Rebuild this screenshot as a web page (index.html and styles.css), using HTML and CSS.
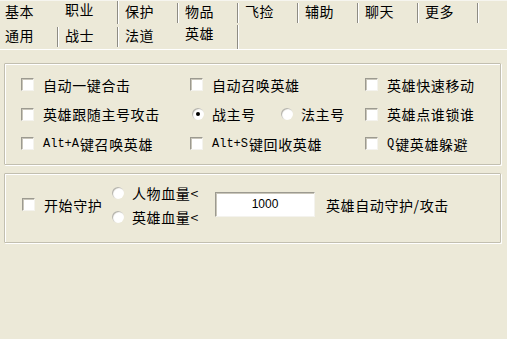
FILE: index.html
```html
<!DOCTYPE html>
<html>
<head>
<meta charset="utf-8">
<link rel="stylesheet" href="styles.css">
</head>
<body>
<div class="tabs">
  <div class="tabrow">
    <div class="tab">基本</div>
    <div class="tab sel sep">职业</div>
    <div class="tab sep">保护</div>
    <div class="tab sep">物品</div>
    <div class="tab sep">飞捡</div>
    <div class="tab sep">辅助</div>
    <div class="tab sep">聊天</div>
    <div class="tab sep">更多</div>
  </div>
  <div class="tabrow row2">
    <div class="tab sep">通用</div>
    <div class="tab sep">战士</div>
    <div class="tab">法道</div>
    <div class="tab sel sep">英雄</div>
  </div>
</div>
<div class="panel">
  <div class="group g1">
    <label class="item"><span class="cb"></span><span>自动一键合击</span></label>
    <label class="item"><span class="cb"></span><span>自动召唤英雄</span></label>
    <label class="item"><span class="cb"></span><span>英雄快速移动</span></label>
    <label class="item"><span class="cb"></span><span>英雄跟随主号攻击</span></label>
    <div class="item radios">
      <label class="ritem r-war"><span class="rb on"></span><span>战主号</span></label>
      <label class="ritem"><span class="rb"></span><span>法主号</span></label>
    </div>
    <label class="item"><span class="cb"></span><span>英雄点谁锁谁</span></label>
    <label class="item"><span class="cb"></span><span class="mono">Alt+A</span><span>键召唤英雄</span></label>
    <label class="item"><span class="cb"></span><span class="mono">Alt+S</span><span>键回收英雄</span></label>
    <label class="item"><span class="cb"></span><span class="mono">Q</span><span>键英雄躲避</span></label>
  </div>
  <div class="group g2">
    <label class="item guard"><span class="cb"></span><span>开始守护</span></label>
    <div class="rcol">
      <label class="ritem"><span class="rb"></span><span>人物血量&lt;</span></label>
      <label class="ritem"><span class="rb"></span><span>英雄血量&lt;</span></label>
    </div>
    <div class="edit">1000</div>
    <div class="note">英雄自动守护/攻击</div>
  </div>
</div>
</body>
</html>
```
FILE: styles.css
```css
* { box-sizing: border-box; }
html, body {
  margin: 0;
  padding: 0;
  background: #ECE9D8;
  width: 507px;
  height: 339px;
  overflow: hidden;
}
body {
  font-family: "Noto Sans CJK SC", "Liberation Sans", sans-serif;
  font-size: 14px;
  letter-spacing: 0.6px;
  color: #000;
  border-top: 1px solid #F6F5EF;
}
.tabs { display: flex; flex-direction: column; }
.tabrow {
  display: flex;
  height: 24px;
  align-items: center;
}
.tab {
  width: 58px;
  margin-right: 2px;
  height: 20px;
  line-height: 16px;
  padding-left: 5px;
  white-space: nowrap;
}
.tab.sep {
  border-right: 1px solid #8E8C84;
  box-shadow: 1px 0 0 #FFFFFF;
}
.tab.sel {
  align-self: flex-start;
  height: 23px;
}
.row2 .tab.sel { height: 24px; }
.panel {
  border-top: 1px solid #FFFFFF;
  padding: 13px 6px 0 4px;
}
.group {
  border: 1px solid #C2BFB0;
  box-shadow: inset 1px 1px 0 #FFFFFF, 1px 1px 0 #FFFFFF;
  border-radius: 1px;
}
.g1 {
  display: grid;
  grid-template-columns: 169px 175px 1fr;
  grid-auto-rows: 29.5px;
  padding: 6px 0 5px 16px;
}
.item {
  display: flex;
  align-items: center;
  white-space: nowrap;
}
.cb {
  width: 13px;
  height: 13px;
  background: #FFFFFF;
  border: 1px solid;
  border-color: #9C9A90 #F4F3EE #F4F3EE #9C9A90;
  box-shadow: inset 1px 1px 0 #C9C6BA;
  margin-right: 9px;
  flex: none;
}
.mono {
  font-family: "Liberation Mono", monospace;
  font-size: 12px;
  letter-spacing: 0;
  margin-right: 1px;
}
.ritem {
  display: flex;
  align-items: center;
  white-space: nowrap;
}
.r-war { width: 91px; padding-left: 2px; }
.rb {
  width: 12px;
  height: 12px;
  border-radius: 50%;
  background: #FFFFFF;
  box-shadow: inset 1px 1px 1px #B0AEA4;
  margin-right: 8px;
  flex: none;
  display: flex;
  align-items: center;
  justify-content: center;
}
.rb.on::before {
  content: "";
  width: 4px;
  height: 4px;
  border-radius: 50%;
  background: #000;
}
.g2 {
  margin-top: 8px;
  height: 70px;
  display: flex;
  align-items: center;
  padding-left: 17px;
  padding-bottom: 6px;
}
.guard { width: 90px; }
.rcol {
  display: flex;
  flex-direction: column;
  gap: 5px;
  width: 103px;
}
.rcol .ritem { height: 19px; }
.edit {
  width: 100px;
  height: 25px;
  background: #FFFFFF;
  border: 1px solid;
  border-color: #9C9A90 #F4F3EE #F4F3EE #9C9A90;
  box-shadow: inset 1px 1px 0 #C9C6BA;
  text-align: center;
  line-height: 22px;
  font-family: "Liberation Sans", sans-serif;
  font-size: 12px;
  letter-spacing: 0;
  margin-right: 11px;
}
.note { white-space: nowrap; }
```
